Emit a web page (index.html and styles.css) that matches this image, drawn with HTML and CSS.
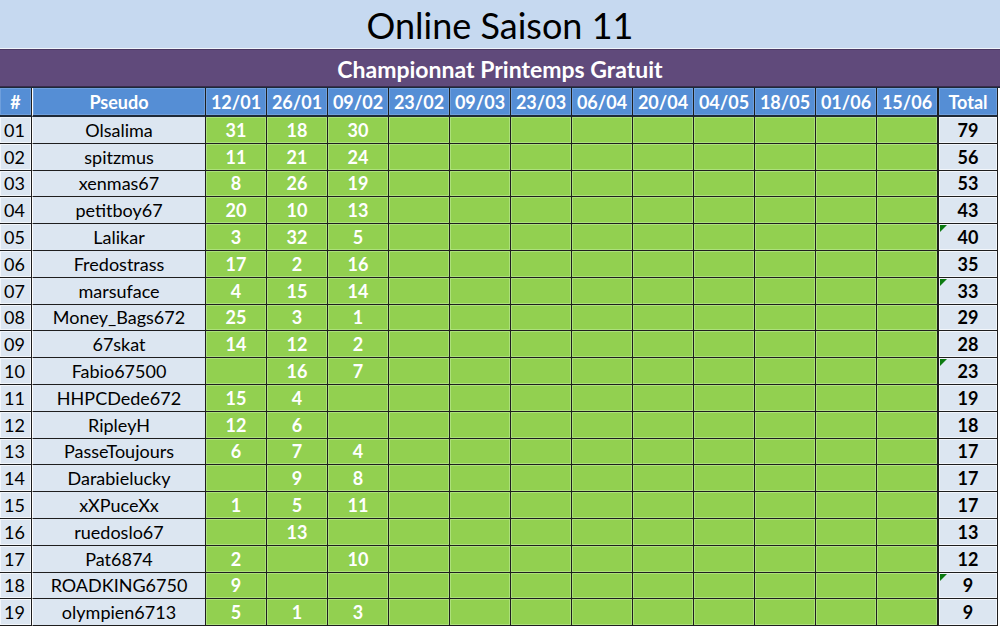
FILE: index.html
```html
<!DOCTYPE html>
<html lang="fr">
<head>
<meta charset="utf-8">
<title>Online Saison 11</title>
<link rel="stylesheet" href="styles.css">
</head>
<body>
<div class="sheet">
  <div class="title">Online Saison 11</div>
  <div class="subtitle">Championnat Printemps Gratuit</div>
  <div class="table">
    <div class="row head">
      <div class="c num">#</div><div class="c name">Pseudo</div>
      <div class="c date">12/01</div><div class="c date">26/01</div><div class="c date">09/02</div><div class="c date">23/02</div><div class="c date">09/03</div><div class="c date">23/03</div><div class="c date">06/04</div><div class="c date">20/04</div><div class="c date">04/05</div><div class="c date">18/05</div><div class="c date">01/06</div><div class="c date">15/06</div>
      <div class="c total">Total</div>
    </div>
    <div class="row"><div class="c num">01</div><div class="c name">Olsalima</div><div class="c pt">31</div><div class="c pt">18</div><div class="c pt">30</div><div class="c pt"></div><div class="c pt"></div><div class="c pt"></div><div class="c pt"></div><div class="c pt"></div><div class="c pt"></div><div class="c pt"></div><div class="c pt"></div><div class="c pt"></div><div class="c total">79</div></div>
    <div class="row"><div class="c num">02</div><div class="c name">spitzmus</div><div class="c pt">11</div><div class="c pt">21</div><div class="c pt">24</div><div class="c pt"></div><div class="c pt"></div><div class="c pt"></div><div class="c pt"></div><div class="c pt"></div><div class="c pt"></div><div class="c pt"></div><div class="c pt"></div><div class="c pt"></div><div class="c total">56</div></div>
    <div class="row"><div class="c num">03</div><div class="c name">xenmas67</div><div class="c pt">8</div><div class="c pt">26</div><div class="c pt">19</div><div class="c pt"></div><div class="c pt"></div><div class="c pt"></div><div class="c pt"></div><div class="c pt"></div><div class="c pt"></div><div class="c pt"></div><div class="c pt"></div><div class="c pt"></div><div class="c total">53</div></div>
    <div class="row"><div class="c num">04</div><div class="c name">petitboy67</div><div class="c pt">20</div><div class="c pt">10</div><div class="c pt">13</div><div class="c pt"></div><div class="c pt"></div><div class="c pt"></div><div class="c pt"></div><div class="c pt"></div><div class="c pt"></div><div class="c pt"></div><div class="c pt"></div><div class="c pt"></div><div class="c total">43</div></div>
    <div class="row"><div class="c num">05</div><div class="c name">Lalikar</div><div class="c pt">3</div><div class="c pt">32</div><div class="c pt">5</div><div class="c pt"></div><div class="c pt"></div><div class="c pt"></div><div class="c pt"></div><div class="c pt"></div><div class="c pt"></div><div class="c pt"></div><div class="c pt"></div><div class="c pt"></div><div class="c total note">40</div></div>
    <div class="row"><div class="c num">06</div><div class="c name">Fredostrass</div><div class="c pt">17</div><div class="c pt">2</div><div class="c pt">16</div><div class="c pt"></div><div class="c pt"></div><div class="c pt"></div><div class="c pt"></div><div class="c pt"></div><div class="c pt"></div><div class="c pt"></div><div class="c pt"></div><div class="c pt"></div><div class="c total">35</div></div>
    <div class="row"><div class="c num">07</div><div class="c name">marsuface</div><div class="c pt">4</div><div class="c pt">15</div><div class="c pt">14</div><div class="c pt"></div><div class="c pt"></div><div class="c pt"></div><div class="c pt"></div><div class="c pt"></div><div class="c pt"></div><div class="c pt"></div><div class="c pt"></div><div class="c pt"></div><div class="c total note">33</div></div>
    <div class="row"><div class="c num">08</div><div class="c name">Money_Bags672</div><div class="c pt">25</div><div class="c pt">3</div><div class="c pt">1</div><div class="c pt"></div><div class="c pt"></div><div class="c pt"></div><div class="c pt"></div><div class="c pt"></div><div class="c pt"></div><div class="c pt"></div><div class="c pt"></div><div class="c pt"></div><div class="c total">29</div></div>
    <div class="row"><div class="c num">09</div><div class="c name">67skat</div><div class="c pt">14</div><div class="c pt">12</div><div class="c pt">2</div><div class="c pt"></div><div class="c pt"></div><div class="c pt"></div><div class="c pt"></div><div class="c pt"></div><div class="c pt"></div><div class="c pt"></div><div class="c pt"></div><div class="c pt"></div><div class="c total">28</div></div>
    <div class="row"><div class="c num">10</div><div class="c name">Fabio67500</div><div class="c pt"></div><div class="c pt">16</div><div class="c pt">7</div><div class="c pt"></div><div class="c pt"></div><div class="c pt"></div><div class="c pt"></div><div class="c pt"></div><div class="c pt"></div><div class="c pt"></div><div class="c pt"></div><div class="c pt"></div><div class="c total note">23</div></div>
    <div class="row"><div class="c num">11</div><div class="c name">HHPCDede672</div><div class="c pt">15</div><div class="c pt">4</div><div class="c pt"></div><div class="c pt"></div><div class="c pt"></div><div class="c pt"></div><div class="c pt"></div><div class="c pt"></div><div class="c pt"></div><div class="c pt"></div><div class="c pt"></div><div class="c pt"></div><div class="c total">19</div></div>
    <div class="row"><div class="c num">12</div><div class="c name">RipleyH</div><div class="c pt">12</div><div class="c pt">6</div><div class="c pt"></div><div class="c pt"></div><div class="c pt"></div><div class="c pt"></div><div class="c pt"></div><div class="c pt"></div><div class="c pt"></div><div class="c pt"></div><div class="c pt"></div><div class="c pt"></div><div class="c total">18</div></div>
    <div class="row"><div class="c num">13</div><div class="c name">PasseToujours</div><div class="c pt">6</div><div class="c pt">7</div><div class="c pt">4</div><div class="c pt"></div><div class="c pt"></div><div class="c pt"></div><div class="c pt"></div><div class="c pt"></div><div class="c pt"></div><div class="c pt"></div><div class="c pt"></div><div class="c pt"></div><div class="c total">17</div></div>
    <div class="row"><div class="c num">14</div><div class="c name">Darabielucky</div><div class="c pt"></div><div class="c pt">9</div><div class="c pt">8</div><div class="c pt"></div><div class="c pt"></div><div class="c pt"></div><div class="c pt"></div><div class="c pt"></div><div class="c pt"></div><div class="c pt"></div><div class="c pt"></div><div class="c pt"></div><div class="c total">17</div></div>
    <div class="row"><div class="c num">15</div><div class="c name">xXPuceXx</div><div class="c pt">1</div><div class="c pt">5</div><div class="c pt">11</div><div class="c pt"></div><div class="c pt"></div><div class="c pt"></div><div class="c pt"></div><div class="c pt"></div><div class="c pt"></div><div class="c pt"></div><div class="c pt"></div><div class="c pt"></div><div class="c total">17</div></div>
    <div class="row"><div class="c num">16</div><div class="c name">ruedoslo67</div><div class="c pt"></div><div class="c pt">13</div><div class="c pt"></div><div class="c pt"></div><div class="c pt"></div><div class="c pt"></div><div class="c pt"></div><div class="c pt"></div><div class="c pt"></div><div class="c pt"></div><div class="c pt"></div><div class="c pt"></div><div class="c total">13</div></div>
    <div class="row"><div class="c num">17</div><div class="c name">Pat6874</div><div class="c pt">2</div><div class="c pt"></div><div class="c pt">10</div><div class="c pt"></div><div class="c pt"></div><div class="c pt"></div><div class="c pt"></div><div class="c pt"></div><div class="c pt"></div><div class="c pt"></div><div class="c pt"></div><div class="c pt"></div><div class="c total">12</div></div>
    <div class="row"><div class="c num">18</div><div class="c name">ROADKING6750</div><div class="c pt">9</div><div class="c pt"></div><div class="c pt"></div><div class="c pt"></div><div class="c pt"></div><div class="c pt"></div><div class="c pt"></div><div class="c pt"></div><div class="c pt"></div><div class="c pt"></div><div class="c pt"></div><div class="c pt"></div><div class="c total note">9</div></div>
    <div class="row"><div class="c num">19</div><div class="c name">olympien6713</div><div class="c pt">5</div><div class="c pt">1</div><div class="c pt">3</div><div class="c pt"></div><div class="c pt"></div><div class="c pt"></div><div class="c pt"></div><div class="c pt"></div><div class="c pt"></div><div class="c pt"></div><div class="c pt"></div><div class="c pt"></div><div class="c total">9</div></div>
  </div>
</div>
</body>
</html>
```

FILE: styles.css
```css
html, body {
  margin: 0;
  padding: 0;
  background: #ffffff;
}
body {
  width: 1000px;
  height: 626px;
  overflow: hidden;
  font-family: "Lato", "Liberation Sans", sans-serif;
}
.sheet {
  display: flex;
  flex-direction: column;
  width: 1000px;
}
.title {
  height: 48px;
  line-height: 50px;
  background: #c6d9f0;
  text-align: center;
  font-size: 36px;
  color: #000;
  border-bottom: 1px solid #eef4fb;
}
.subtitle {
  height: 36px;
  line-height: 38px;
  background: #604a7b;
  border-top: 1px solid #4b3963;
  border-bottom: 1px solid #3a2d4c;
  text-align: center;
  font-size: 23px;
  font-weight: 700;
  color: #ffffff;
}
.table {
  display: flex;
  flex-direction: column;
  border-top: 1px solid #1c2a3a;
}
.row {
  display: grid;
  grid-template-columns: 32px 174px repeat(12, 61px) 60px;
  height: 26.8px;
}
.row.head {
  height: 29px;
}
.c {
  box-sizing: border-box;
  border-right: 1px solid #1e1e1e;
  border-bottom: 1px solid #1e1e1e;
  display: flex;
  align-items: center;
  justify-content: center;
  font-size: 18px;
  white-space: nowrap;
  overflow: hidden;
}
.head .c {
  background: #558ed5;
  color: #ffffff;
  font-weight: 700;
  box-shadow: inset 0 0 0 1px #6f9fdc;
  border-bottom: 2px solid #1e2a38;
}
.num {
  background: #dce6f1;
  justify-content: flex-start;
  padding-left: 4px;
  color: #000;
  box-shadow: inset 0 0 0 1px #f2f6fb;
}
.head .num {
  justify-content: center;
  padding-left: 0;
}
.name {
  background: #dce6f1;
  color: #000;
  border-left: 1px solid #ffffff;
}
.pt {
  background: #92d050;
  color: #ffffff;
  font-weight: 700;
  box-shadow: inset 0 0 0 1px #ace07a;
}
.total {
  position: relative;
  background: #dce6f1;
  color: #000;
  font-weight: 700;
  border-left: 1px solid #1e1e1e;
  box-shadow: inset 0 0 0 1px #f2f6fb;
}
.note::before {
  content: "";
  position: absolute;
  top: 1px;
  left: 1px;
  width: 0;
  height: 0;
  border-top: 7px solid #0b7a10;
  border-right: 7px solid transparent;
}
```
